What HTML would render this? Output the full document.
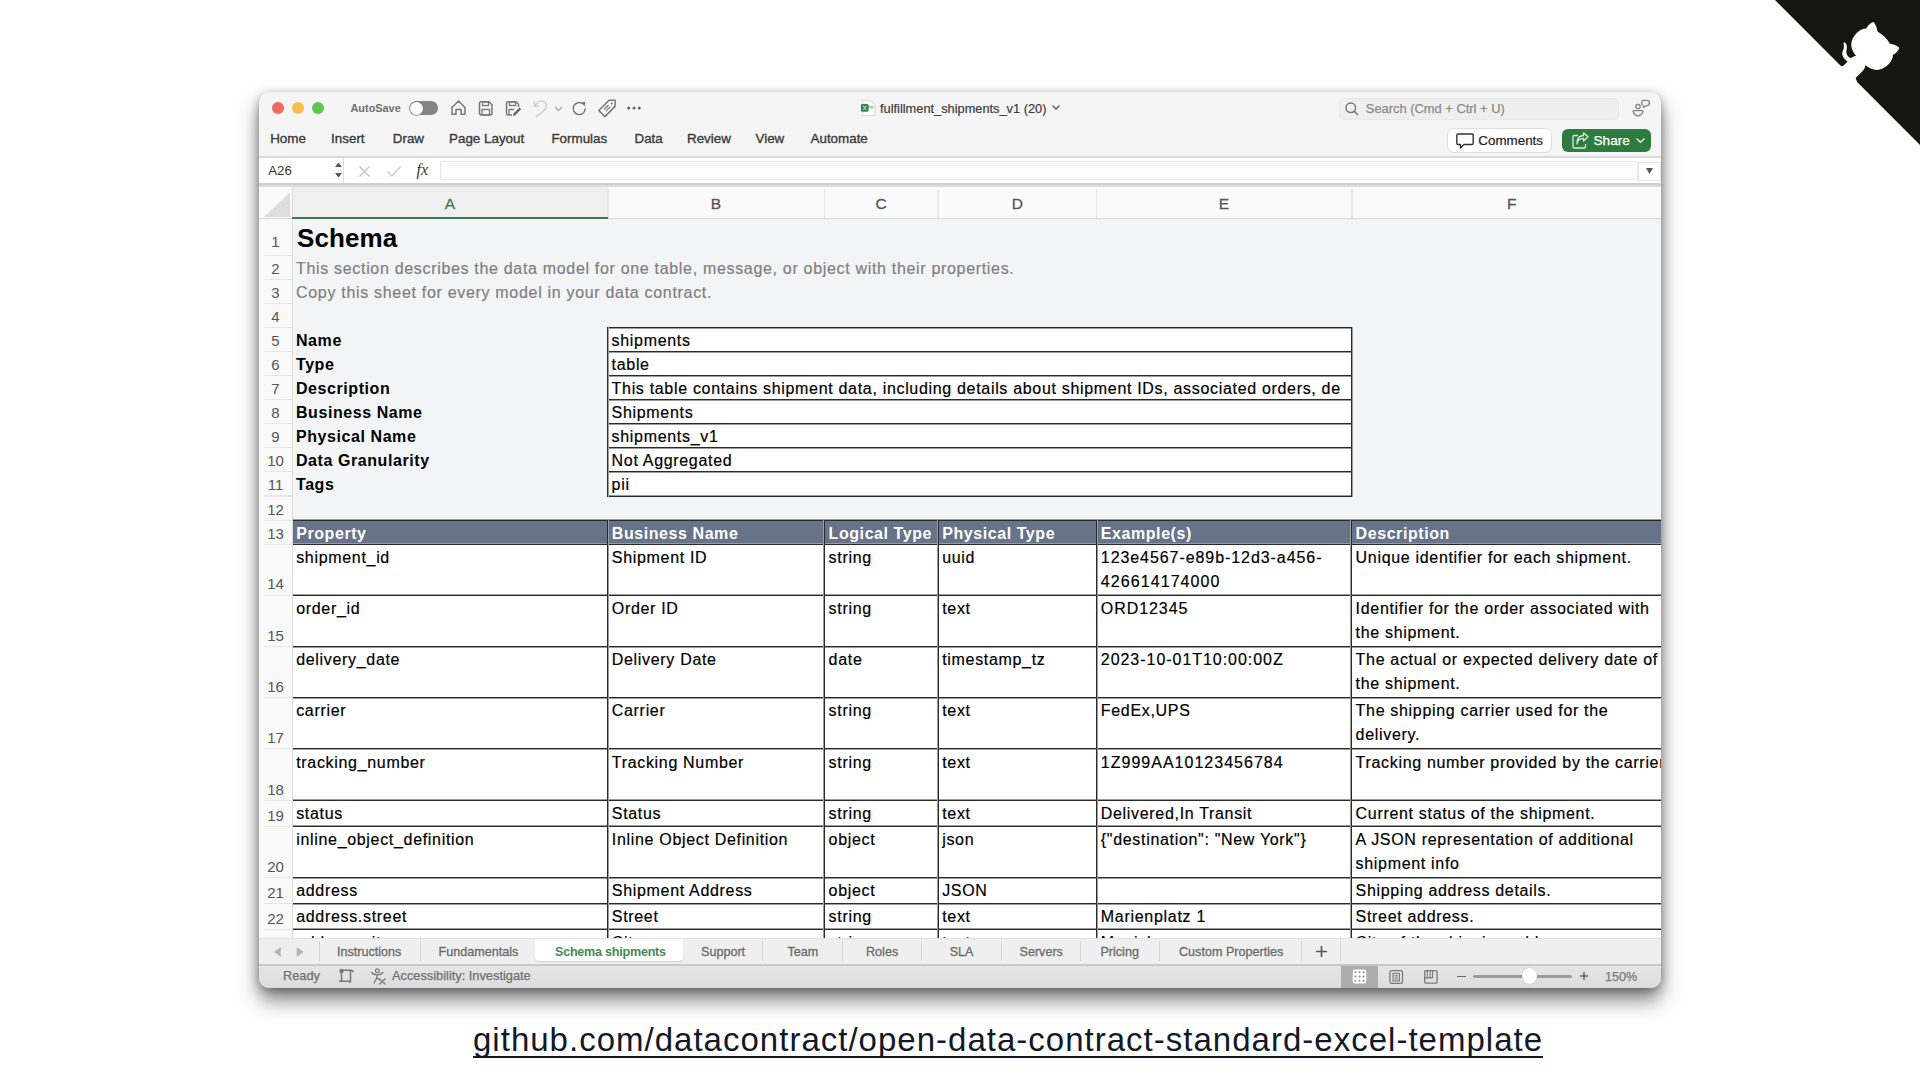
<!DOCTYPE html>
<html><head><meta charset="utf-8">
<style>
*{box-sizing:border-box;margin:0;padding:0}
html,body{width:1920px;height:1080px;overflow:hidden;background:#fff;font-family:"Liberation Sans",sans-serif}
.abs{position:absolute}
svg{display:block;overflow:visible}
#win{position:absolute;left:259px;top:92px;width:1402px;height:896px;border-radius:10px;overflow:hidden;background:#f5f5f5;
 box-shadow:0 12px 20px rgba(0,0,0,.5),0 2px 8px rgba(0,0,0,.3)}
.t{position:absolute;white-space:nowrap;line-height:1}
.c{-webkit-text-stroke:.2px currentColor}
#url{position:absolute;left:473px;top:1020.3px;font-size:33px;letter-spacing:1.01px;text-decoration-skip-ink:none;color:#111827;white-space:nowrap;line-height:40px;text-decoration:underline;text-decoration-thickness:2px;text-underline-offset:5px}
</style></head><body>
<div id="win">
<div class="abs" style="left:13.00px;top:10.00px;width:12.00px;height:12.00px;border-radius:50%;background:#ed6a5e"></div>
<div class="abs" style="left:33.00px;top:10.00px;width:12.00px;height:12.00px;border-radius:50%;background:#f5bf4f"></div>
<div class="abs" style="left:53.00px;top:10.00px;width:12.00px;height:12.00px;border-radius:50%;background:#61c554"></div>
<div class="t" style="left:91.50px;top:11.07px;font-size:10.9px;color:#707070;font-weight:bold;">AutoSave</div>
<div class="abs" style="left:151.00px;top:9.20px;width:28.00px;height:13.80px;border-radius:7px;background:#858585"></div>
<div class="abs" style="left:151.30px;top:9.50px;width:13.20px;height:13.20px;border-radius:50%;background:#fff;box-shadow:0 0 0 .8px #7a7a7a"></div>
<svg class="abs" style="left:191.00px;top:7.00px;" width="17" height="17" viewBox="0 0 17 17"><path d="M2,8.5 L8.5,2 L15,8.5 L15,15.3 L11,15.3 L11,10.5 L6,10.5 L6,15.3 L2,15.3 Z" fill="none" stroke="#777" stroke-width="1.5" stroke-linejoin="round"/></svg>
<svg class="abs" style="left:218.00px;top:8.00px;" width="17" height="17" viewBox="0 0 17 17"><path d="M2.5,3.5 Q2.5,1.8 4.2,1.8 L12,1.8 L15,4.8 L15,13.3 Q15,15 13.3,15 L4.2,15 Q2.5,15 2.5,13.3 Z" fill="none" stroke="#777" stroke-width="1.5"/><rect x="5.5" y="2" width="6" height="3.5" fill="none" stroke="#777" stroke-width="1.3"/><rect x="5" y="9.5" width="7.5" height="5.5" fill="none" stroke="#777" stroke-width="1.3"/></svg>
<svg class="abs" style="left:245.00px;top:8.00px;" width="18" height="17" viewBox="0 0 18 17"><path d="M2.5,3.5 Q2.5,1.8 4.2,1.8 L12,1.8 L14.5,4.3 L14.5,7 M8,15 L4.2,15 Q2.5,15 2.5,13.3 L2.5,3.5" fill="none" stroke="#777" stroke-width="1.5"/><rect x="5.5" y="2" width="6" height="3.5" fill="none" stroke="#777" stroke-width="1.3"/><path d="M5,14.5 L5,9.5 L10,9.5" fill="none" stroke="#777" stroke-width="1.3"/><path d="M9,16 L9.5,13.5 L15.5,7.5 L17.2,9.2 L11.2,15.2 Z" fill="#666"/></svg>
<svg class="abs" style="left:273.00px;top:7.00px;" width="17" height="18" viewBox="0 0 17 18"><path d="M2.3,7.3 Q5.8,1.8 10.3,2.1 Q14.6,2.8 14.3,7.6 Q13.8,11.6 4.3,17.2 M1.9,2.6 L2.3,7.4 L6.6,6.8" fill="none" stroke="#cacaca" stroke-width="1.35" stroke-linecap="round" stroke-linejoin="round"/></svg>
<svg class="abs" style="left:295.00px;top:13.50px;" width="9" height="6" viewBox="0 0 9 6"><path d="M1,1 L4.5,4.5 L8,1" fill="none" stroke="#a8a8a8" stroke-width="1.3"/></svg>
<svg class="abs" style="left:312.00px;top:7.50px;" width="17" height="17" viewBox="0 0 17 17"><path d="M14.2,8.5 A6,6 0 1 1 12,3.9" fill="none" stroke="#777" stroke-width="1.5"/><path d="M9.8,2.5 L14.3,1.8 L14,6.3 Z" fill="#777"/></svg>
<svg class="abs" style="left:338.00px;top:6.00px;" width="20" height="20" viewBox="0 0 20 20"><path d="M1.8,12.5 L12,2.3 L18.2,2.2 L18.1,8.4 L7.9,18.6 Z" fill="none" stroke="#777" stroke-width="1.5" stroke-linejoin="round"/><circle cx="14.7" cy="5.6" r="1" fill="#777"/><path d="M7,11.5 L11.5,7 M8.8,13.2 L13.3,8.7" stroke="#777" stroke-width="1.1"/></svg>
<svg class="abs" style="left:367.00px;top:13.00px;" width="16" height="6" viewBox="0 0 16 6"><circle cx="2.7" cy="3" r="1.5" fill="#666"/><circle cx="8" cy="3" r="1.5" fill="#666"/><circle cx="13.3" cy="3" r="1.5" fill="#666"/></svg>
<svg class="abs" style="left:601.00px;top:7.00px;" width="16" height="18" viewBox="0 0 16 18"><path d="M2.8,1.3 L10.3,1.3 L15,5.8 L15,16.5 L2.8,16.5 Z" fill="#fff" stroke="#d4d4d4" stroke-width=".9" stroke-linejoin="round"/><rect x="8" y="6.8" width="5.5" height="2.6" fill="#9fceaa"/><rect x="1" y="5" width="7.5" height="7.8" rx="1.3" fill="#3a8150"/><path d="M3.2,6.8 L6.3,11 M6.3,6.8 L3.2,11" stroke="#a9d8b3" stroke-width="1.1"/></svg>
<div class="t" style="left:621.00px;top:10.56px;font-size:12.8px;color:#3c3c3c;-webkit-text-stroke:.2px #3c3c3c">fulfillment_shipments_v1 (20)</div>
<svg class="abs" style="left:792.00px;top:12.00px;" width="10" height="7" viewBox="0 0 10 7"><path d="M1.5,1.5 L5,5 L8.5,1.5" fill="none" stroke="#555" stroke-width="1.3"/></svg>
<div class="abs" style="left:1080.00px;top:6.00px;width:280.00px;height:21.50px;border-radius:6px;background:#efefef;box-shadow:inset 0 0 0 1px #e8e8e8"></div>
<svg class="abs" style="left:1085.00px;top:9.00px;" width="16" height="16" viewBox="0 0 16 16"><circle cx="6.8" cy="6.8" r="4.8" fill="none" stroke="#777" stroke-width="1.5"/><path d="M10.3,10.3 L14,14" stroke="#777" stroke-width="1.6"/></svg>
<div class="t" style="left:1106.80px;top:10.68px;font-size:12.9px;color:#8a8a8a;-webkit-text-stroke:.25px #8a8a8a">Search (Cmd + Ctrl + U)</div>
<svg class="abs" style="left:1372.00px;top:6.00px;" width="20" height="20" viewBox="0 0 20 20"><circle cx="7" cy="8.5" r="2.2" fill="none" stroke="#858585" stroke-width="1.3"/><path d="M2.6,12.6 L11.4,12.6 Q12.3,12.6 11.8,13.8 Q10.3,17.8 7,17.8 Q3.7,17.8 2.2,13.8 Q1.7,12.6 2.6,12.6Z" fill="none" stroke="#858585" stroke-width="1.3"/><path d="M12.8,2.4 L16.2,2.4 Q18.4,2.4 18.4,4.8 Q18.4,7.6 15.8,7.9 L14.5,8.1 L12.9,9.6 L12.6,8 Q10.6,7.4 10.6,4.9 Q10.6,2.4 12.8,2.4Z" fill="none" stroke="#858585" stroke-width="1.3" stroke-linejoin="round"/></svg>
<div class="t" style="left:11.20px;top:40.26px;font-size:13.4px;color:#3a3a3a;-webkit-text-stroke:.35px #3a3a3a">Home</div>
<div class="t" style="left:72.10px;top:40.26px;font-size:13.4px;color:#3a3a3a;-webkit-text-stroke:.35px #3a3a3a">Insert</div>
<div class="t" style="left:133.80px;top:40.26px;font-size:13.4px;color:#3a3a3a;-webkit-text-stroke:.35px #3a3a3a">Draw</div>
<div class="t" style="left:190.00px;top:40.26px;font-size:13.4px;color:#3a3a3a;-webkit-text-stroke:.35px #3a3a3a">Page Layout</div>
<div class="t" style="left:292.40px;top:40.26px;font-size:13.4px;color:#3a3a3a;-webkit-text-stroke:.35px #3a3a3a">Formulas</div>
<div class="t" style="left:375.50px;top:40.26px;font-size:13.4px;color:#3a3a3a;-webkit-text-stroke:.35px #3a3a3a">Data</div>
<div class="t" style="left:428.00px;top:40.26px;font-size:13.4px;color:#3a3a3a;-webkit-text-stroke:.35px #3a3a3a">Review</div>
<div class="t" style="left:496.50px;top:40.26px;font-size:13.4px;color:#3a3a3a;-webkit-text-stroke:.35px #3a3a3a">View</div>
<div class="t" style="left:551.50px;top:40.26px;font-size:13.4px;color:#3a3a3a;-webkit-text-stroke:.35px #3a3a3a">Automate</div>
<div class="abs" style="left:1189.00px;top:36.60px;width:103.00px;height:23.40px;border-radius:6px;background:#fff;box-shadow:0 0 0 1px #dedede"></div>
<svg class="abs" style="left:1196.00px;top:40.00px;" width="20" height="18" viewBox="0 0 20 18"><path d="M3,2 L17,2 Q18.2,2 18.2,3.2 L18.2,11.3 Q18.2,12.5 17,12.5 L9,12.5 L5.5,16 L5.5,12.5 L3,12.5 Q1.8,12.5 1.8,11.3 L1.8,3.2 Q1.8,2 3,2Z" fill="none" stroke="#333" stroke-width="1.4" stroke-linejoin="round"/></svg>
<div class="t" style="left:1219.30px;top:41.86px;font-size:13.4px;color:#222;-webkit-text-stroke:.2px #222">Comments</div>
<div class="abs" style="left:1303.00px;top:36.60px;width:89.00px;height:23.70px;border-radius:6px;background:#2e7b3f"></div>
<svg class="abs" style="left:1312.00px;top:40.00px;" width="18" height="18" viewBox="0 0 18 18"><path d="M7,3.5 L3,3.5 Q2,3.5 2,4.5 L2,15 Q2,16 3,16 L13.5,16 Q14.5,16 14.5,15 L14.5,12" fill="none" stroke="#d9ead9" stroke-width="1.3"/><path d="M6,12 Q6.5,6.5 12.5,6.3 L12.5,9 L17,4.8 L12.5,0.8 L12.5,3.5 Q5.5,4 6,12Z" fill="none" stroke="#d9ead9" stroke-width="1.3" stroke-linejoin="round"/></svg>
<div class="t" style="left:1334.50px;top:41.69px;font-size:13.6px;color:#fff;-webkit-text-stroke:.25px #fff">Share</div>
<svg class="abs" style="left:1376.00px;top:45.00px;" width="11" height="7" viewBox="0 0 11 7"><path d="M1.5,1.5 L5.5,5.3 L9.5,1.5" fill="none" stroke="#e8f2e8" stroke-width="1.3"/></svg>
<div class="abs" style="left:0.00px;top:64.30px;width:1402.00px;height:1.30px;background:#d9d9d9"></div>
<div class="abs" style="left:0.00px;top:65.60px;width:1402.00px;height:25.70px;background:#fff"></div>
<div class="abs" style="left:0.00px;top:91.30px;width:1402.00px;height:1.50px;background:#cfcfcf"></div>
<div class="abs" style="left:0.00px;top:92.80px;width:1402.00px;height:2.00px;background:#dcdcdc"></div>
<div class="abs" style="left:84.00px;top:65.60px;width:1.30px;height:25.70px;background:#dedede"></div>
<div class="t" style="left:9.30px;top:71.53px;font-size:13.2px;color:#333;">A26</div>
<svg class="abs" style="left:75.00px;top:69.00px;" width="9" height="18" viewBox="0 0 9 18"><path d="M1,6 L4.5,1.5 L8,6Z M1,12 L4.5,16.5 L8,12Z" fill="#555"/></svg>
<svg class="abs" style="left:99.00px;top:73.00px;" width="13" height="13" viewBox="0 0 13 13"><path d="M1.5,1.5 L11.5,11.5 M11.5,1.5 L1.5,11.5" stroke="#c4c4c4" stroke-width="1.4"/></svg>
<svg class="abs" style="left:127.00px;top:73.00px;" width="16" height="13" viewBox="0 0 16 13"><path d="M1.5,6.5 L5.8,11 L14.5,1.8" fill="none" stroke="#cbcbcb" stroke-width="1.4"/></svg>
<div class="t" style="left:157.50px;top:70.26px;font-size:16px;color:#333;font-family:'Liberation Serif',serif;font-style:italic">fx</div>
<div class="abs" style="left:181.00px;top:69.30px;width:1197.50px;height:19.20px;background:#fcfcfc;box-shadow:inset 0 0 0 1px #e9e9e9"></div>
<div class="abs" style="left:1378.50px;top:69.50px;width:23.50px;height:19.00px;background:#fff;box-shadow:inset 0 0 0 1px #e2e2e2"></div>
<svg class="abs" style="left:1386.00px;top:75.00px;" width="9" height="8" viewBox="0 0 9 8"><path d="M1,1 L8,1 L4.5,7Z" fill="#555"/></svg>
<div class="abs" style="left:0.00px;top:94.80px;width:1402.00px;height:32.20px;background:#fafafa"></div>
<div class="abs" style="left:33.00px;top:94.80px;width:316.00px;height:32.20px;background:#f0f0f0"></div>
<svg class="abs" style="left:0.00px;top:94.80px;" width="33" height="32" viewBox="0 0 33 32"><path d="M5,30 L31,5 L31,30Z" fill="#dedede"/></svg>
<div class="abs" style="left:32.50px;top:94.80px;width:1.30px;height:32.20px;background:#dcdcdc"></div>
<div class="abs" style="left:564.70px;top:98.00px;width:1.20px;height:29.00px;background:#e8e8e8"></div>
<div class="abs" style="left:678.40px;top:98.00px;width:1.20px;height:29.00px;background:#e8e8e8"></div>
<div class="abs" style="left:837.10px;top:98.00px;width:1.20px;height:29.00px;background:#e8e8e8"></div>
<div class="abs" style="left:1092.40px;top:98.00px;width:1.20px;height:29.00px;background:#e8e8e8"></div>
<div class="abs" style="left:348.40px;top:98.00px;width:1.20px;height:29.00px;background:#e8e8e8"></div>
<div class="abs" style="left:0.00px;top:126.30px;width:1402.00px;height:1.20px;background:#d6d6d6"></div>
<div class="abs" style="left:33.00px;top:124.80px;width:316.00px;height:2.40px;background:#3a7a4b"></div>
<div class="t" style="left:33.00px;top:103.68px;width:315.60px;text-align:center;font-size:15.5px;color:#3a7a4b;-webkit-text-stroke:.3px #3a7a4b">A</div>
<div class="t" style="left:348.60px;top:103.68px;width:216.80px;text-align:center;font-size:15.5px;color:#555;-webkit-text-stroke:.3px #555">B</div>
<div class="t" style="left:565.40px;top:103.68px;width:113.60px;text-align:center;font-size:15.5px;color:#555;-webkit-text-stroke:.3px #555">C</div>
<div class="t" style="left:679.00px;top:103.68px;width:158.60px;text-align:center;font-size:15.5px;color:#555;-webkit-text-stroke:.3px #555">D</div>
<div class="t" style="left:837.60px;top:103.68px;width:254.80px;text-align:center;font-size:15.5px;color:#555;-webkit-text-stroke:.3px #555">E</div>
<div class="t" style="left:1092.40px;top:103.68px;width:320.60px;text-align:center;font-size:15.5px;color:#555;-webkit-text-stroke:.3px #555">F</div>
<div class="abs" style="left:0.00px;top:127.50px;width:1402.00px;height:719.00px;background:#f3f4f6"></div>
<div class="abs" style="left:0.00px;top:127.50px;width:33.00px;height:719.00px;background:#f9f9f9"></div>
<div class="abs" style="left:32.50px;top:127.50px;width:1.30px;height:719.00px;background:#dadada"></div>
<div class="abs" style="left:5.00px;top:162.90px;width:27.50px;height:1.20px;background:#e6e6e6"></div>
<div class="t" style="left:3px;top:142.00px;width:27px;text-align:center;font-size:15px;color:#555">1</div>
<div class="abs" style="left:5.00px;top:186.90px;width:27.50px;height:1.20px;background:#e6e6e6"></div>
<div class="t" style="left:3px;top:168.80px;width:27px;text-align:center;font-size:15px;color:#555">2</div>
<div class="abs" style="left:5.00px;top:210.90px;width:27.50px;height:1.20px;background:#e6e6e6"></div>
<div class="t" style="left:3px;top:192.80px;width:27px;text-align:center;font-size:15px;color:#555">3</div>
<div class="abs" style="left:5.00px;top:235.00px;width:27.50px;height:1.20px;background:#e6e6e6"></div>
<div class="t" style="left:3px;top:216.90px;width:27px;text-align:center;font-size:15px;color:#555">4</div>
<div class="abs" style="left:5.00px;top:259.10px;width:27.50px;height:1.20px;background:#e6e6e6"></div>
<div class="t" style="left:3px;top:241.00px;width:27px;text-align:center;font-size:15px;color:#555">5</div>
<div class="abs" style="left:5.00px;top:283.10px;width:27.50px;height:1.20px;background:#e6e6e6"></div>
<div class="t" style="left:3px;top:265.00px;width:27px;text-align:center;font-size:15px;color:#555">6</div>
<div class="abs" style="left:5.00px;top:307.20px;width:27.50px;height:1.20px;background:#e6e6e6"></div>
<div class="t" style="left:3px;top:289.10px;width:27px;text-align:center;font-size:15px;color:#555">7</div>
<div class="abs" style="left:5.00px;top:331.20px;width:27.50px;height:1.20px;background:#e6e6e6"></div>
<div class="t" style="left:3px;top:313.10px;width:27px;text-align:center;font-size:15px;color:#555">8</div>
<div class="abs" style="left:5.00px;top:355.30px;width:27.50px;height:1.20px;background:#e6e6e6"></div>
<div class="t" style="left:3px;top:337.20px;width:27px;text-align:center;font-size:15px;color:#555">9</div>
<div class="abs" style="left:5.00px;top:379.30px;width:27.50px;height:1.20px;background:#e6e6e6"></div>
<div class="t" style="left:3px;top:361.20px;width:27px;text-align:center;font-size:15px;color:#555">10</div>
<div class="abs" style="left:5.00px;top:403.40px;width:27.50px;height:1.20px;background:#e6e6e6"></div>
<div class="t" style="left:3px;top:385.30px;width:27px;text-align:center;font-size:15px;color:#555">11</div>
<div class="abs" style="left:5.00px;top:427.70px;width:27.50px;height:1.20px;background:#e6e6e6"></div>
<div class="t" style="left:3px;top:409.60px;width:27px;text-align:center;font-size:15px;color:#555">12</div>
<div class="abs" style="left:5.00px;top:451.80px;width:27.50px;height:1.20px;background:#e6e6e6"></div>
<div class="t" style="left:3px;top:433.70px;width:27px;text-align:center;font-size:15px;color:#555">13</div>
<div class="abs" style="left:5.00px;top:502.50px;width:27.50px;height:1.20px;background:#e6e6e6"></div>
<div class="t" style="left:3px;top:484.40px;width:27px;text-align:center;font-size:15px;color:#555">14</div>
<div class="abs" style="left:5.00px;top:554.10px;width:27.50px;height:1.20px;background:#e6e6e6"></div>
<div class="t" style="left:3px;top:536.00px;width:27px;text-align:center;font-size:15px;color:#555">15</div>
<div class="abs" style="left:5.00px;top:605.20px;width:27.50px;height:1.20px;background:#e6e6e6"></div>
<div class="t" style="left:3px;top:587.10px;width:27px;text-align:center;font-size:15px;color:#555">16</div>
<div class="abs" style="left:5.00px;top:656.30px;width:27.50px;height:1.20px;background:#e6e6e6"></div>
<div class="t" style="left:3px;top:638.20px;width:27px;text-align:center;font-size:15px;color:#555">17</div>
<div class="abs" style="left:5.00px;top:707.80px;width:27.50px;height:1.20px;background:#e6e6e6"></div>
<div class="t" style="left:3px;top:689.70px;width:27px;text-align:center;font-size:15px;color:#555">18</div>
<div class="abs" style="left:5.00px;top:733.60px;width:27.50px;height:1.20px;background:#e6e6e6"></div>
<div class="t" style="left:3px;top:715.50px;width:27px;text-align:center;font-size:15px;color:#555">19</div>
<div class="abs" style="left:5.00px;top:785.00px;width:27.50px;height:1.20px;background:#e6e6e6"></div>
<div class="t" style="left:3px;top:766.90px;width:27px;text-align:center;font-size:15px;color:#555">20</div>
<div class="abs" style="left:5.00px;top:811.00px;width:27.50px;height:1.20px;background:#e6e6e6"></div>
<div class="t" style="left:3px;top:792.90px;width:27px;text-align:center;font-size:15px;color:#555">21</div>
<div class="abs" style="left:5.00px;top:836.80px;width:27.50px;height:1.20px;background:#e6e6e6"></div>
<div class="t" style="left:3px;top:818.70px;width:27px;text-align:center;font-size:15px;color:#555">22</div>
<div class="t" style="left:38.00px;top:132.99px;font-size:26px;color:#000;font-weight:bold;letter-spacing:0.1px;">Schema</div>
<div class="t" style="left:37.00px;top:168.66px;font-size:16px;color:#7f7f7f;letter-spacing:0.68px;-webkit-text-stroke:.2px #7f7f7f">This section describes the data model for one table, message, or object with their properties.</div>
<div class="t" style="left:37.00px;top:192.66px;font-size:16px;color:#7f7f7f;letter-spacing:0.6900000000000001px;-webkit-text-stroke:.2px #7f7f7f">Copy this sheet for every model in your data contract.</div>
<div class="abs" style="left:348.60px;top:235.60px;width:743.80px;height:168.40px;background:#fff"></div>
<div class="abs" style="left:348.00px;top:235.00px;width:745.20px;height:1.00px;background:#2a2a2a"></div>
<div class="abs" style="left:348.00px;top:236.00px;width:745.20px;height:1.00px;background:#9c9c9c"></div>
<div class="abs" style="left:348.00px;top:259.00px;width:745.20px;height:1.00px;background:#2a2a2a"></div>
<div class="abs" style="left:348.00px;top:260.00px;width:745.20px;height:1.00px;background:#9c9c9c"></div>
<div class="abs" style="left:348.00px;top:283.00px;width:745.20px;height:1.00px;background:#2a2a2a"></div>
<div class="abs" style="left:348.00px;top:284.00px;width:745.20px;height:1.00px;background:#9c9c9c"></div>
<div class="abs" style="left:348.00px;top:307.00px;width:745.20px;height:1.00px;background:#2a2a2a"></div>
<div class="abs" style="left:348.00px;top:308.00px;width:745.20px;height:1.00px;background:#9c9c9c"></div>
<div class="abs" style="left:348.00px;top:331.00px;width:745.20px;height:1.00px;background:#2a2a2a"></div>
<div class="abs" style="left:348.00px;top:332.00px;width:745.20px;height:1.00px;background:#9c9c9c"></div>
<div class="abs" style="left:348.00px;top:355.00px;width:745.20px;height:1.00px;background:#2a2a2a"></div>
<div class="abs" style="left:348.00px;top:356.00px;width:745.20px;height:1.00px;background:#9c9c9c"></div>
<div class="abs" style="left:348.00px;top:379.00px;width:745.20px;height:1.00px;background:#2a2a2a"></div>
<div class="abs" style="left:348.00px;top:380.00px;width:745.20px;height:1.00px;background:#9c9c9c"></div>
<div class="abs" style="left:348.00px;top:404.00px;width:745.20px;height:1.00px;background:#2a2a2a"></div>
<div class="abs" style="left:348.00px;top:403.00px;width:745.20px;height:1.00px;background:#9c9c9c"></div>
<div class="abs" style="left:348.00px;top:235.00px;width:1.00px;height:169.60px;background:#2a2a2a"></div>
<div class="abs" style="left:349.00px;top:235.00px;width:1.00px;height:169.60px;background:#9c9c9c"></div>
<div class="abs" style="left:1092.00px;top:235.00px;width:1.00px;height:169.60px;background:#2a2a2a"></div>
<div class="abs" style="left:1093.00px;top:235.00px;width:1.00px;height:169.60px;background:#9c9c9c"></div>
<div class="t" style="left:37.00px;top:241.16px;font-size:16px;color:#000;font-weight:bold;letter-spacing:0.57px;">Name</div>
<div class="t" style="left:37.00px;top:265.26px;font-size:16px;color:#000;font-weight:bold;letter-spacing:0.57px;">Type</div>
<div class="t" style="left:37.00px;top:289.26px;font-size:16px;color:#000;font-weight:bold;letter-spacing:0.57px;">Description</div>
<div class="t" style="left:37.00px;top:313.36px;font-size:16px;color:#000;font-weight:bold;letter-spacing:0.57px;">Business Name</div>
<div class="t" style="left:37.00px;top:337.36px;font-size:16px;color:#000;font-weight:bold;letter-spacing:0.57px;">Physical Name</div>
<div class="t" style="left:37.00px;top:361.46px;font-size:16px;color:#000;font-weight:bold;letter-spacing:0.57px;">Data Granularity</div>
<div class="t" style="left:37.00px;top:385.46px;font-size:16px;color:#000;font-weight:bold;letter-spacing:0.57px;">Tags</div>
<div class="abs" style="left:348.60px;top:235.60px;width:742.80px;height:170px;overflow:hidden">
<div class="t" style="left:4px;top:5.36px;font-size:16px;letter-spacing:0.68px;color:#000;-webkit-text-stroke:.2px #000">shipments</div>
<div class="t" style="left:4px;top:29.46px;font-size:16px;letter-spacing:0.68px;color:#000;-webkit-text-stroke:.2px #000">table</div>
<div class="t" style="left:4px;top:53.46px;font-size:16px;letter-spacing:0.68px;color:#000;-webkit-text-stroke:.2px #000">This table contains shipment data, including details about shipment IDs, associated orders, de</div>
<div class="t" style="left:4px;top:77.56px;font-size:16px;letter-spacing:0.68px;color:#000;-webkit-text-stroke:.2px #000">Shipments</div>
<div class="t" style="left:4px;top:101.56px;font-size:16px;letter-spacing:0.68px;color:#000;-webkit-text-stroke:.2px #000">shipments_v1</div>
<div class="t" style="left:4px;top:125.66px;font-size:16px;letter-spacing:0.68px;color:#000;-webkit-text-stroke:.2px #000">Not Aggregated</div>
<div class="t" style="left:4px;top:149.66px;font-size:16px;letter-spacing:0.68px;color:#000;-webkit-text-stroke:.2px #000">pii</div>
</div>
<div class="abs" style="left:33.80px;top:428.30px;width:1368.20px;height:24.10px;background:#677389"></div>
<div class="t" style="left:37.20px;top:433.96px;font-size:16px;color:#fff;font-weight:bold;letter-spacing:0.57px;">Property</div>
<div class="t" style="left:352.80px;top:433.96px;font-size:16px;color:#fff;font-weight:bold;letter-spacing:0.57px;">Business Name</div>
<div class="t" style="left:569.60px;top:433.96px;font-size:16px;color:#fff;font-weight:bold;letter-spacing:0.57px;">Logical Type</div>
<div class="t" style="left:683.20px;top:433.96px;font-size:16px;color:#fff;font-weight:bold;letter-spacing:0.57px;">Physical Type</div>
<div class="t" style="left:841.80px;top:433.96px;font-size:16px;color:#fff;font-weight:bold;letter-spacing:0.57px;">Example(s)</div>
<div class="t" style="left:1096.60px;top:433.96px;font-size:16px;color:#fff;font-weight:bold;letter-spacing:0.57px;">Description</div>
<div class="abs" style="left:33.80px;top:452.40px;width:1368.20px;height:394.10px;background:#fff"></div>
<div class="t" style="left:37.20px;top:458.06px;font-size:16px;color:#000;letter-spacing:0.68px;-webkit-text-stroke:.2px #000">shipment_id</div>
<div class="t" style="left:352.80px;top:458.06px;font-size:16px;color:#000;letter-spacing:0.68px;-webkit-text-stroke:.2px #000">Shipment ID</div>
<div class="t" style="left:569.60px;top:458.06px;font-size:16px;color:#000;letter-spacing:0.68px;-webkit-text-stroke:.2px #000">string</div>
<div class="t" style="left:683.20px;top:458.06px;font-size:16px;color:#000;letter-spacing:0.68px;-webkit-text-stroke:.2px #000">uuid</div>
<div class="t" style="left:841.80px;top:458.06px;font-size:16px;color:#000;letter-spacing:0.93px;-webkit-text-stroke:.2px #000">123e4567-e89b-12d3-a456-</div>
<div class="t" style="left:841.80px;top:481.86px;font-size:16px;color:#000;letter-spacing:1.08px;-webkit-text-stroke:.2px #000">426614174000</div>
<div class="t" style="left:1096.60px;top:458.06px;font-size:16px;color:#000;letter-spacing:0.68px;-webkit-text-stroke:.2px #000">Unique identifier for each shipment.</div>
<div class="t" style="left:37.20px;top:508.76px;font-size:16px;color:#000;letter-spacing:0.68px;-webkit-text-stroke:.2px #000">order_id</div>
<div class="t" style="left:352.80px;top:508.76px;font-size:16px;color:#000;letter-spacing:0.68px;-webkit-text-stroke:.2px #000">Order ID</div>
<div class="t" style="left:569.60px;top:508.76px;font-size:16px;color:#000;letter-spacing:0.68px;-webkit-text-stroke:.2px #000">string</div>
<div class="t" style="left:683.20px;top:508.76px;font-size:16px;color:#000;letter-spacing:0.68px;-webkit-text-stroke:.2px #000">text</div>
<div class="t" style="left:841.80px;top:508.76px;font-size:16px;color:#000;letter-spacing:0.93px;-webkit-text-stroke:.2px #000">ORD12345</div>
<div class="t" style="left:1096.60px;top:508.76px;font-size:16px;color:#000;letter-spacing:0.68px;-webkit-text-stroke:.2px #000">Identifier for the order associated with</div>
<div class="t" style="left:1096.60px;top:532.56px;font-size:16px;color:#000;letter-spacing:0.68px;-webkit-text-stroke:.2px #000">the shipment.</div>
<div class="t" style="left:37.20px;top:560.36px;font-size:16px;color:#000;letter-spacing:0.68px;-webkit-text-stroke:.2px #000">delivery_date</div>
<div class="t" style="left:352.80px;top:560.36px;font-size:16px;color:#000;letter-spacing:0.68px;-webkit-text-stroke:.2px #000">Delivery Date</div>
<div class="t" style="left:569.60px;top:560.36px;font-size:16px;color:#000;letter-spacing:0.68px;-webkit-text-stroke:.2px #000">date</div>
<div class="t" style="left:683.20px;top:560.36px;font-size:16px;color:#000;letter-spacing:0.68px;-webkit-text-stroke:.2px #000">timestamp_tz</div>
<div class="t" style="left:841.80px;top:560.36px;font-size:16px;color:#000;letter-spacing:0.96px;-webkit-text-stroke:.2px #000">2023-10-01T10:00:00Z</div>
<div class="t" style="left:1096.60px;top:560.36px;font-size:16px;color:#000;letter-spacing:0.68px;-webkit-text-stroke:.2px #000">The actual or expected delivery date of</div>
<div class="t" style="left:1096.60px;top:584.16px;font-size:16px;color:#000;letter-spacing:0.68px;-webkit-text-stroke:.2px #000">the shipment.</div>
<div class="t" style="left:37.20px;top:611.46px;font-size:16px;color:#000;letter-spacing:0.68px;-webkit-text-stroke:.2px #000">carrier</div>
<div class="t" style="left:352.80px;top:611.46px;font-size:16px;color:#000;letter-spacing:0.68px;-webkit-text-stroke:.2px #000">Carrier</div>
<div class="t" style="left:569.60px;top:611.46px;font-size:16px;color:#000;letter-spacing:0.68px;-webkit-text-stroke:.2px #000">string</div>
<div class="t" style="left:683.20px;top:611.46px;font-size:16px;color:#000;letter-spacing:0.68px;-webkit-text-stroke:.2px #000">text</div>
<div class="t" style="left:841.80px;top:611.46px;font-size:16px;color:#000;letter-spacing:0.68px;-webkit-text-stroke:.2px #000">FedEx,UPS</div>
<div class="t" style="left:1096.60px;top:611.46px;font-size:16px;color:#000;letter-spacing:0.68px;-webkit-text-stroke:.2px #000">The shipping carrier used for the</div>
<div class="t" style="left:1096.60px;top:635.26px;font-size:16px;color:#000;letter-spacing:0.68px;-webkit-text-stroke:.2px #000">delivery.</div>
<div class="t" style="left:37.20px;top:662.56px;font-size:16px;color:#000;letter-spacing:0.68px;-webkit-text-stroke:.2px #000">tracking_number</div>
<div class="t" style="left:352.80px;top:662.56px;font-size:16px;color:#000;letter-spacing:0.68px;-webkit-text-stroke:.2px #000">Tracking Number</div>
<div class="t" style="left:569.60px;top:662.56px;font-size:16px;color:#000;letter-spacing:0.68px;-webkit-text-stroke:.2px #000">string</div>
<div class="t" style="left:683.20px;top:662.56px;font-size:16px;color:#000;letter-spacing:0.68px;-webkit-text-stroke:.2px #000">text</div>
<div class="t" style="left:841.80px;top:662.56px;font-size:16px;color:#000;letter-spacing:1.013px;-webkit-text-stroke:.2px #000">1Z999AA10123456784</div>
<div class="t" style="left:1096.60px;top:662.56px;font-size:16px;color:#000;letter-spacing:0.68px;-webkit-text-stroke:.2px #000">Tracking number provided by the carrier</div>
<div class="t" style="left:37.20px;top:714.06px;font-size:16px;color:#000;letter-spacing:0.68px;-webkit-text-stroke:.2px #000">status</div>
<div class="t" style="left:352.80px;top:714.06px;font-size:16px;color:#000;letter-spacing:0.68px;-webkit-text-stroke:.2px #000">Status</div>
<div class="t" style="left:569.60px;top:714.06px;font-size:16px;color:#000;letter-spacing:0.68px;-webkit-text-stroke:.2px #000">string</div>
<div class="t" style="left:683.20px;top:714.06px;font-size:16px;color:#000;letter-spacing:0.68px;-webkit-text-stroke:.2px #000">text</div>
<div class="t" style="left:841.80px;top:714.06px;font-size:16px;color:#000;letter-spacing:0.68px;-webkit-text-stroke:.2px #000">Delivered,In Transit</div>
<div class="t" style="left:1096.60px;top:714.06px;font-size:16px;color:#000;letter-spacing:0.68px;-webkit-text-stroke:.2px #000">Current status of the shipment.</div>
<div class="t" style="left:37.20px;top:739.86px;font-size:16px;color:#000;letter-spacing:0.68px;-webkit-text-stroke:.2px #000">inline_object_definition</div>
<div class="t" style="left:352.80px;top:739.86px;font-size:16px;color:#000;letter-spacing:0.68px;-webkit-text-stroke:.2px #000">Inline Object Definition</div>
<div class="t" style="left:569.60px;top:739.86px;font-size:16px;color:#000;letter-spacing:0.68px;-webkit-text-stroke:.2px #000">object</div>
<div class="t" style="left:683.20px;top:739.86px;font-size:16px;color:#000;letter-spacing:0.68px;-webkit-text-stroke:.2px #000">json</div>
<div class="t" style="left:841.80px;top:739.86px;font-size:16px;color:#000;letter-spacing:0.68px;-webkit-text-stroke:.2px #000">{&quot;destination&quot;: &quot;New York&quot;}</div>
<div class="t" style="left:1096.60px;top:739.86px;font-size:16px;color:#000;letter-spacing:0.68px;-webkit-text-stroke:.2px #000">A JSON representation of additional</div>
<div class="t" style="left:1096.60px;top:763.66px;font-size:16px;color:#000;letter-spacing:0.68px;-webkit-text-stroke:.2px #000">shipment info</div>
<div class="t" style="left:37.20px;top:791.26px;font-size:16px;color:#000;letter-spacing:0.68px;-webkit-text-stroke:.2px #000">address</div>
<div class="t" style="left:352.80px;top:791.26px;font-size:16px;color:#000;letter-spacing:0.68px;-webkit-text-stroke:.2px #000">Shipment Address</div>
<div class="t" style="left:569.60px;top:791.26px;font-size:16px;color:#000;letter-spacing:0.68px;-webkit-text-stroke:.2px #000">object</div>
<div class="t" style="left:683.20px;top:791.26px;font-size:16px;color:#000;letter-spacing:0.68px;-webkit-text-stroke:.2px #000">JSON</div>
<div class="t" style="left:1096.60px;top:791.26px;font-size:16px;color:#000;letter-spacing:0.68px;-webkit-text-stroke:.2px #000">Shipping address details.</div>
<div class="t" style="left:37.20px;top:817.26px;font-size:16px;color:#000;letter-spacing:0.68px;-webkit-text-stroke:.2px #000">address.street</div>
<div class="t" style="left:352.80px;top:817.26px;font-size:16px;color:#000;letter-spacing:0.68px;-webkit-text-stroke:.2px #000">Street</div>
<div class="t" style="left:569.60px;top:817.26px;font-size:16px;color:#000;letter-spacing:0.68px;-webkit-text-stroke:.2px #000">string</div>
<div class="t" style="left:683.20px;top:817.26px;font-size:16px;color:#000;letter-spacing:0.68px;-webkit-text-stroke:.2px #000">text</div>
<div class="t" style="left:841.80px;top:817.26px;font-size:16px;color:#000;letter-spacing:0.711px;-webkit-text-stroke:.2px #000">Marienplatz 1</div>
<div class="t" style="left:1096.60px;top:817.26px;font-size:16px;color:#000;letter-spacing:0.68px;-webkit-text-stroke:.2px #000">Street address.</div>
<div class="t" style="left:37.20px;top:843.06px;font-size:16px;color:#000;letter-spacing:0.68px;-webkit-text-stroke:.2px #000">address.city</div>
<div class="t" style="left:352.80px;top:843.06px;font-size:16px;color:#000;letter-spacing:0.68px;-webkit-text-stroke:.2px #000">City</div>
<div class="t" style="left:569.60px;top:843.06px;font-size:16px;color:#000;letter-spacing:0.68px;-webkit-text-stroke:.2px #000">string</div>
<div class="t" style="left:683.20px;top:843.06px;font-size:16px;color:#000;letter-spacing:0.68px;-webkit-text-stroke:.2px #000">text</div>
<div class="t" style="left:841.80px;top:843.06px;font-size:16px;color:#000;letter-spacing:0.68px;-webkit-text-stroke:.2px #000">Munich</div>
<div class="t" style="left:1096.60px;top:843.06px;font-size:16px;color:#000;letter-spacing:0.68px;-webkit-text-stroke:.2px #000">City of the shipping address.</div>
<div class="abs" style="left:33.80px;top:428.00px;width:1368.20px;height:1.00px;background:#2a2a2a"></div>
<div class="abs" style="left:33.80px;top:427.00px;width:1368.20px;height:1.00px;background:#9c9c9c"></div>
<div class="abs" style="left:33.80px;top:452.00px;width:1368.20px;height:1.00px;background:#2a2a2a"></div>
<div class="abs" style="left:33.80px;top:451.00px;width:1368.20px;height:1.00px;background:#9c9c9c"></div>
<div class="abs" style="left:33.80px;top:503.00px;width:1368.20px;height:1.00px;background:#2a2a2a"></div>
<div class="abs" style="left:33.80px;top:502.00px;width:1368.20px;height:1.00px;background:#9c9c9c"></div>
<div class="abs" style="left:33.80px;top:554.00px;width:1368.20px;height:1.00px;background:#2a2a2a"></div>
<div class="abs" style="left:33.80px;top:555.00px;width:1368.20px;height:1.00px;background:#9c9c9c"></div>
<div class="abs" style="left:33.80px;top:605.00px;width:1368.20px;height:1.00px;background:#2a2a2a"></div>
<div class="abs" style="left:33.80px;top:606.00px;width:1368.20px;height:1.00px;background:#9c9c9c"></div>
<div class="abs" style="left:33.80px;top:656.00px;width:1368.20px;height:1.00px;background:#2a2a2a"></div>
<div class="abs" style="left:33.80px;top:657.00px;width:1368.20px;height:1.00px;background:#9c9c9c"></div>
<div class="abs" style="left:33.80px;top:708.00px;width:1368.20px;height:1.00px;background:#2a2a2a"></div>
<div class="abs" style="left:33.80px;top:707.00px;width:1368.20px;height:1.00px;background:#9c9c9c"></div>
<div class="abs" style="left:33.80px;top:734.00px;width:1368.20px;height:1.00px;background:#2a2a2a"></div>
<div class="abs" style="left:33.80px;top:733.00px;width:1368.20px;height:1.00px;background:#9c9c9c"></div>
<div class="abs" style="left:33.80px;top:785.00px;width:1368.20px;height:1.00px;background:#2a2a2a"></div>
<div class="abs" style="left:33.80px;top:786.00px;width:1368.20px;height:1.00px;background:#9c9c9c"></div>
<div class="abs" style="left:33.80px;top:811.00px;width:1368.20px;height:1.00px;background:#2a2a2a"></div>
<div class="abs" style="left:33.80px;top:812.00px;width:1368.20px;height:1.00px;background:#9c9c9c"></div>
<div class="abs" style="left:33.80px;top:837.00px;width:1368.20px;height:1.00px;background:#2a2a2a"></div>
<div class="abs" style="left:33.80px;top:836.00px;width:1368.20px;height:1.00px;background:#9c9c9c"></div>
<div class="abs" style="left:348.00px;top:428.00px;width:1.00px;height:418.50px;background:#2a2a2a"></div>
<div class="abs" style="left:349.00px;top:428.00px;width:1.00px;height:418.50px;background:#9c9c9c"></div>
<div class="abs" style="left:565.00px;top:428.00px;width:1.00px;height:418.50px;background:#2a2a2a"></div>
<div class="abs" style="left:564.00px;top:428.00px;width:1.00px;height:418.50px;background:#9c9c9c"></div>
<div class="abs" style="left:679.00px;top:428.00px;width:1.00px;height:418.50px;background:#2a2a2a"></div>
<div class="abs" style="left:678.00px;top:428.00px;width:1.00px;height:418.50px;background:#9c9c9c"></div>
<div class="abs" style="left:837.00px;top:428.00px;width:1.00px;height:418.50px;background:#2a2a2a"></div>
<div class="abs" style="left:838.00px;top:428.00px;width:1.00px;height:418.50px;background:#9c9c9c"></div>
<div class="abs" style="left:1092.00px;top:428.00px;width:1.00px;height:418.50px;background:#2a2a2a"></div>
<div class="abs" style="left:1091.00px;top:428.00px;width:1.00px;height:418.50px;background:#9c9c9c"></div>
<div class="abs" style="left:0.00px;top:846.50px;width:1402.00px;height:26.50px;background:#efefef"></div>
<div class="abs" style="left:0.00px;top:846.00px;width:1402.00px;height:1.00px;background:#e2e2e2"></div>
<div class="abs" style="left:0.00px;top:872.30px;width:1402.00px;height:1.30px;background:#c9c9c9"></div>
<svg class="abs" style="left:12.00px;top:852.00px;" width="36" height="16" viewBox="0 0 36 16"><path d="M9.8,2.9 L2.9,7.9 L9.8,12.8Z M25.75,2.9 L32.8,7.9 L25.75,12.8Z" fill="#b3b3b3"/></svg>
<div class="abs" style="left:276.00px;top:846.50px;width:148.40px;height:22.80px;background:#fff;border-radius:0 0 4px 4px;box-shadow:0 1px 1px rgba(0,0,0,.12)"></div>
<div class="abs" style="left:60.00px;top:849.00px;width:1.00px;height:20.00px;background:#d4d4d4"></div>
<div class="abs" style="left:160.70px;top:849.00px;width:1.00px;height:20.00px;background:#d4d4d4"></div>
<div class="abs" style="left:503.20px;top:849.00px;width:1.00px;height:20.00px;background:#d4d4d4"></div>
<div class="abs" style="left:582.50px;top:849.00px;width:1.00px;height:20.00px;background:#d4d4d4"></div>
<div class="abs" style="left:662.30px;top:849.00px;width:1.00px;height:20.00px;background:#d4d4d4"></div>
<div class="abs" style="left:741.50px;top:849.00px;width:1.00px;height:20.00px;background:#d4d4d4"></div>
<div class="abs" style="left:820.70px;top:849.00px;width:1.00px;height:20.00px;background:#d4d4d4"></div>
<div class="abs" style="left:900.30px;top:849.00px;width:1.00px;height:20.00px;background:#d4d4d4"></div>
<div class="abs" style="left:1042.30px;top:849.00px;width:1.00px;height:20.00px;background:#d4d4d4"></div>
<div class="abs" style="left:1081.00px;top:849.00px;width:1.00px;height:20.00px;background:#d4d4d4"></div>
<div class="t" style="left:78.00px;top:853.83px;font-size:12.6px;color:#6b6b6b;-webkit-text-stroke:.3px #6b6b6b">Instructions</div>
<div class="t" style="left:179.50px;top:853.83px;font-size:12.6px;color:#6b6b6b;-webkit-text-stroke:.3px #6b6b6b">Fundamentals</div>
<div class="t" style="left:442.00px;top:853.83px;font-size:12.6px;color:#6b6b6b;-webkit-text-stroke:.3px #6b6b6b">Support</div>
<div class="t" style="left:528.50px;top:853.83px;font-size:12.6px;color:#6b6b6b;-webkit-text-stroke:.3px #6b6b6b">Team</div>
<div class="t" style="left:607.00px;top:853.83px;font-size:12.6px;color:#6b6b6b;-webkit-text-stroke:.3px #6b6b6b">Roles</div>
<div class="t" style="left:690.70px;top:853.83px;font-size:12.6px;color:#6b6b6b;-webkit-text-stroke:.3px #6b6b6b">SLA</div>
<div class="t" style="left:760.50px;top:853.83px;font-size:12.6px;color:#6b6b6b;-webkit-text-stroke:.3px #6b6b6b">Servers</div>
<div class="t" style="left:841.40px;top:853.83px;font-size:12.6px;color:#6b6b6b;-webkit-text-stroke:.3px #6b6b6b">Pricing</div>
<div class="t" style="left:920.00px;top:853.83px;font-size:12.6px;color:#6b6b6b;-webkit-text-stroke:.3px #6b6b6b">Custom Properties</div>
<div class="t" style="left:296.00px;top:853.63px;font-size:12.6px;color:#3f8a55;font-weight:bold;letter-spacing:-0.25px;">Schema shipments</div>
<svg class="abs" style="left:1055.00px;top:852.00px;" width="15" height="15" viewBox="0 0 15 15"><path d="M7.5,2 L7.5,13 M2,7.5 L13,7.5" stroke="#555" stroke-width="1.6"/></svg>
<div class="abs" style="left:0.00px;top:873.60px;width:1402.00px;height:22.40px;background:linear-gradient(#e6e6e6,#dcdcdc)"></div>
<div class="t" style="left:24.00px;top:878.16px;font-size:12.8px;color:#707070;-webkit-text-stroke:.25px #707070">Ready</div>
<svg class="abs" style="left:79.00px;top:876.00px;" width="17" height="16" viewBox="0 0 17 16"><circle cx="3.5" cy="3" r="2.2" fill="#777"/><path d="M3.5,3 L3.5,13.2 M1.2,13.2 L11.5,13.2 M5,2.2 L13,2.2 Q15,2.4 14.8,4.2 M12.5,2.5 L12.5,13 Q12.5,14.5 11,14.3" fill="none" stroke="#777" stroke-width="1.5"/></svg>
<svg class="abs" style="left:111.00px;top:876.00px;" width="17" height="17" viewBox="0 0 17 17"><circle cx="7.3" cy="2.8" r="1.9" fill="none" stroke="#7a7a7a" stroke-width="1.2"/><path d="M1.5,4.5 Q4,7 7.3,6.8 Q10.6,7 13,4.5 M7.3,6.8 L6.5,10.5 L4,15 M6.8,10 L9,11.5 M9.5,11 L15,16 M15,11 L9.5,16" fill="none" stroke="#7a7a7a" stroke-width="1.3" stroke-linecap="round"/></svg>
<div class="t" style="left:133.00px;top:878.16px;font-size:12.8px;color:#707070;-webkit-text-stroke:.25px #707070">Accessibility: Investigate</div>
<div class="abs" style="left:1082.20px;top:873.60px;width:36.60px;height:22.40px;background:#adadad"></div>
<svg class="abs" style="left:1093.00px;top:877.00px;" width="15" height="15" viewBox="0 0 15 15"><rect x=".8" y=".5" width="13.4" height="14" rx="2" fill="#fff"/><g fill="#8a8a8a"><circle cx="3.5" cy="3.3" r="1"/><circle cx="3.5" cy="7.5" r="1"/><circle cx="3.5" cy="11.7" r="1"/><circle cx="7.5" cy="3.3" r="1"/><circle cx="7.5" cy="7.5" r="1"/><circle cx="7.5" cy="11.7" r="1"/><circle cx="11.5" cy="3.3" r="1"/><circle cx="11.5" cy="7.5" r="1"/><circle cx="11.5" cy="11.7" r="1"/></g></svg>
<svg class="abs" style="left:1128.50px;top:876.50px;" width="16" height="16" viewBox="0 0 16 16"><rect x="1.9" y="1.7" width="12.6" height="12.6" rx="1.6" fill="none" stroke="#7a7a7a" stroke-width="1.3"/><rect x="5" y="4.3" width="6.4" height="7.6" fill="none" stroke="#7a7a7a" stroke-width="1.1"/><path d="M6.5,6.3 L9.9,6.3 M6.5,8.1 L9.9,8.1 M6.5,9.9 L9.9,9.9" stroke="#7a7a7a" stroke-width=".9"/></svg>
<svg class="abs" style="left:1164.00px;top:876.50px;" width="16" height="16" viewBox="0 0 16 16"><rect x="1.7" y="1.7" width="12.4" height="12.4" rx="1.2" fill="none" stroke="#7a7a7a" stroke-width="1.3"/><path d="M4.3,1.7 L4.3,8.7 M7.2,1.7 L7.2,8.7 M1.7,8.9 L9.6,8.9 M9.6,1.7 L9.6,8.9" fill="none" stroke="#7a7a7a" stroke-width="1.1"/></svg>
<div class="abs" style="left:1198.00px;top:883.50px;width:9.00px;height:1.70px;background:#6a6a6a"></div>
<div class="abs" style="left:1213.70px;top:883.00px;width:99.60px;height:3.00px;border-radius:2px;background:#9a9a9a"></div>
<div class="abs" style="left:1262.60px;top:876.40px;width:15.60px;height:15.60px;border-radius:50%;background:#fff;box-shadow:0 0 1px rgba(0,0,0,.3)"></div>
<svg class="abs" style="left:1320.00px;top:879.00px;" width="10" height="10" viewBox="0 0 10 10"><path d="M5,1 L5,9 M1,5 L9,5" stroke="#666" stroke-width="1.6"/></svg>
<div class="t" style="left:1346.00px;top:878.53px;font-size:12.6px;color:#7a7a7a;-webkit-text-stroke:.25px #7a7a7a">150%</div>
</div>
<div id="url">github.com/datacontract/open-data-contract-standard-excel-template</div>
<svg class="abs" style="left:1775px;top:0" width="145" height="145" viewBox="0 0 250 250" fill="#151513">
<path d="M0,0 L115,115 L130,115 L142,142 L250,250 L250,0 Z"/>
<g transform="translate(-2,-2)"><path fill="#fff" d="M128.3,109.0 C113.8,99.7 119.0,89.6 119.0,89.6 C122.0,82.7 120.5,78.6 120.5,78.6 C119.2,72.0 123.4,76.3 123.4,76.3 C127.3,80.9 125.5,87.3 125.5,87.3 C122.9,97.6 130.6,101.9 134.4,103.2"/>
<path fill="#fff" d="M115.0,115.0 C114.9,115.1 118.7,116.5 119.8,115.4 L133.7,101.6 C136.9,99.2 139.9,98.4 142.2,98.6 C133.8,88.0 127.5,74.4 143.8,58.0 C148.5,53.4 154.0,51.2 159.7,51.0 C160.3,49.4 163.2,43.6 171.4,40.1 C171.4,40.1 176.1,42.5 178.8,56.2 C183.1,58.6 187.2,61.8 190.9,65.4 C194.5,69.0 197.7,73.2 200.1,77.6 C213.8,80.2 216.3,84.9 216.3,84.9 C212.7,93.1 206.9,96.0 205.4,96.6 C205.1,102.4 203.0,107.8 198.3,112.5 C181.9,128.9 168.3,122.5 157.7,114.1 C157.9,116.9 156.7,120.9 152.7,124.9 L141.0,136.5 C139.8,137.7 141.6,141.9 141.8,141.8 Z"/></g>
</svg>
</body></html>
